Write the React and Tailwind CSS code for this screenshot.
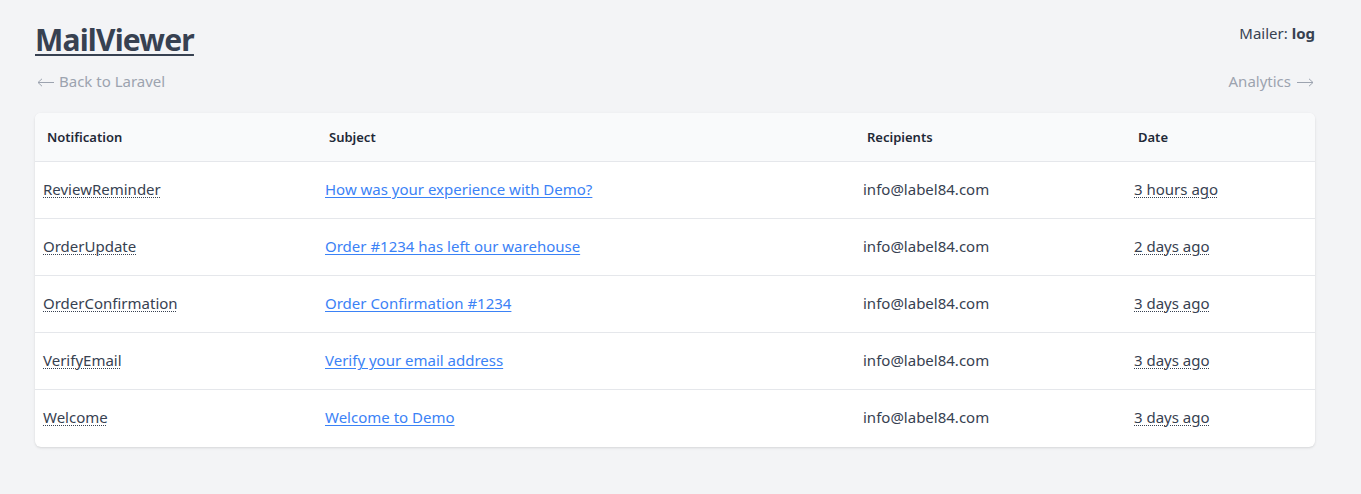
const rows = [
  ['ReviewReminder', 'How was your experience with Demo?', '3 hours ago'],
  ['OrderUpdate', 'Order #1234 has left our warehouse', '2 days ago'],
  ['OrderConfirmation', 'Order Confirmation #1234', '3 days ago'],
  ['VerifyEmail', 'Verify your email address', '3 days ago'],
  ['Welcome', 'Welcome to Demo', '3 days ago'],
];

const dotted = 'underline decoration-dotted decoration-1 underline-offset-2';

function LongArrow({ left }) {
  return (
    <svg width="17" height="9" viewBox="0 0 17 9" fill="none" stroke="currentColor" strokeWidth="1" className="mt-[2px] shrink-0">
      {left ? <path d="M17 4.5H1M5 .8 1 4.5 5 8.2" /> : <path d="M0 4.5h16M12 .8l4 3.7-4 3.7" />}
    </svg>
  );
}

export default function App() {
  return (
    <div className="min-h-[494px] bg-[#f3f4f6] pl-[35px] pr-[46px] pt-[20px] font-['Noto_Sans',sans-serif] text-[#374151]">
      <div className="flex items-start justify-between">
        <a href="#" className="text-[30px] leading-[40px] font-bold tracking-[-0.8px] underline decoration-2 underline-offset-[3px]">
          MailViewer
        </a>
        <div className="pt-[1px] text-[15px] leading-[24px]">
          Mailer: <span className="font-bold">log</span>
        </div>
      </div>

      <div className="mt-[9px] flex justify-between text-[15px] leading-[24px] text-[#9ca3af]">
        <a href="#" className="flex items-center gap-[5px] pl-[2px]">
          <LongArrow left />
          Back to Laravel
        </a>
        <a href="#" className="flex items-center gap-[6px] pr-[1px]">
          Analytics
          <LongArrow />
        </a>
      </div>

      <div className="mt-[20px] w-[1280px] overflow-hidden rounded-md bg-white shadow">
        <table className="w-full table-fixed border-collapse text-left">
          <colgroup>
            <col className="w-[282px]" />
            <col className="w-[538px]" />
            <col className="w-[271px]" />
            <col />
          </colgroup>
          <thead>
            <tr className="h-[48px] border-b border-[#e5e7eb] bg-[#f9fafb] text-[13px] text-[#1f2937]">
              <th className="px-3 pt-[2px] font-semibold">Notification</th>
              <th className="px-3 pt-[2px] font-semibold">Subject</th>
              <th className="px-3 pt-[2px] font-semibold">Recipients</th>
              <th className="px-3 pt-[2px] font-semibold">Date</th>
            </tr>
          </thead>
          <tbody className="text-[15px]">
            {rows.map(([name, subject, date]) => (
              <tr key={name} className="h-[57px] border-b border-[#e5e7eb] last:border-transparent">
                <td className="px-2">
                  <span className={dotted}>{name}</span>
                </td>
                <td className="px-2">
                  <a href="#" className="text-[#3b82f6] underline underline-offset-2">
                    {subject}
                  </a>
                </td>
                <td className="px-2">info@label84.com</td>
                <td className="px-2">
                  <span className={dotted}>{date}</span>
                </td>
              </tr>
            ))}
          </tbody>
        </table>
      </div>
    </div>
  );
}
